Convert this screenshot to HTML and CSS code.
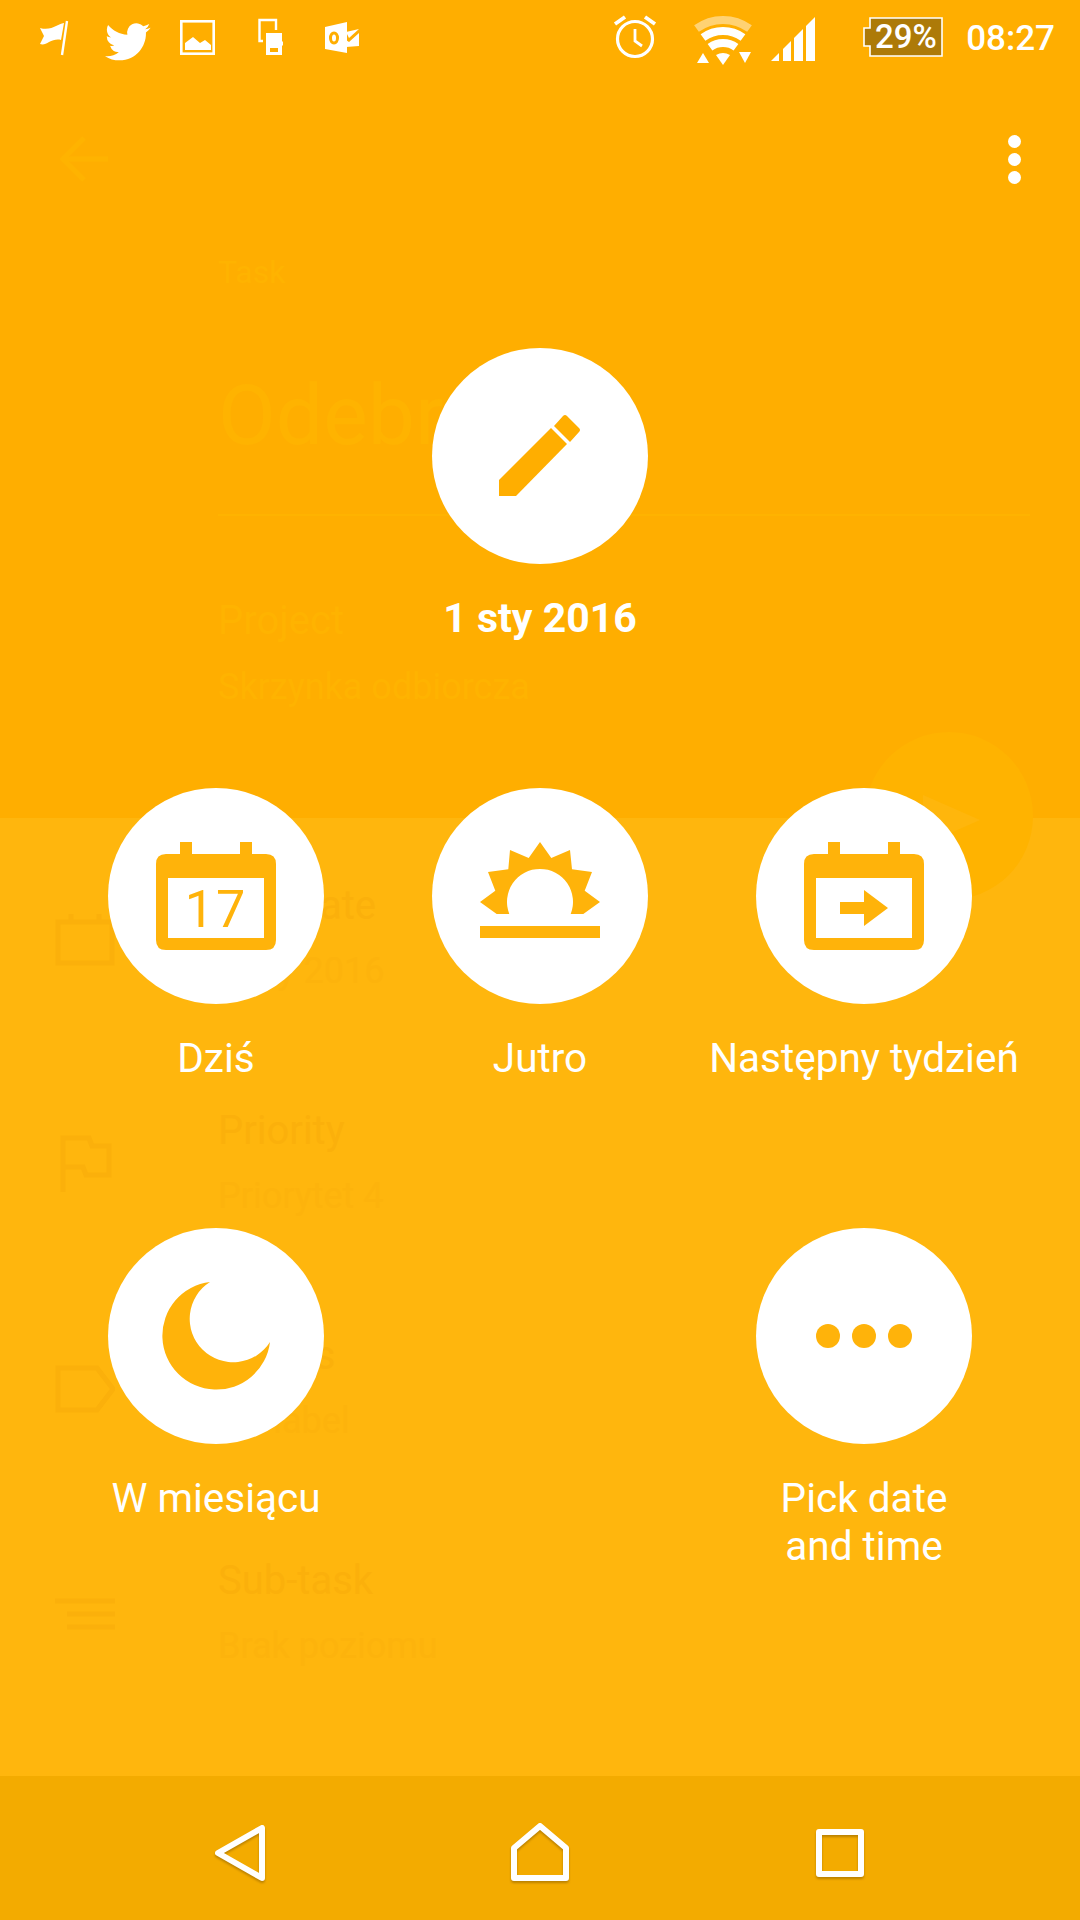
FILE: index.html
```html
<!DOCTYPE html>
<html lang="pl">

  <head>
    <meta charset="UTF-8">
    <meta name="viewport" content="width=device-width, initial-scale=1.0">
    <title>Task - date picker</title>
    <link rel="stylesheet" href="styles.css">
  </head>

  <body>

    <div class="screen">

      <header class="head">
        <div class="status">
          <div class="status-left">
            <svg class="slot" viewBox="18 0 72 76"><path class="w" d="M40 28C47 30 52 28 56 26C60 24 63 23 64 23L61 40C57 39 53 40 49 42C46 44 43 45 40 44L44 36Z"/><path class="ws" stroke-width="2.4" d="M67 21L62 55"/></svg>
            <svg class="slot" viewBox="0 0 72 76"><g transform="translate(15 19) scale(1.9)"><path class="w" d="M23.953 4.57a10 10 0 01-2.825.775 4.958 4.958 0 002.163-2.723c-.951.555-2.005.959-3.127 1.184a4.92 4.92 0 00-8.384 4.482C7.69 8.095 4.067 6.13 1.64 3.162a4.822 4.822 0 00-.666 2.475c0 1.71.87 3.213 2.188 4.096a4.904 4.904 0 01-2.228-.616v.06a4.923 4.923 0 003.946 4.827 4.996 4.996 0 01-2.212.085 4.936 4.936 0 004.604 3.417 9.867 9.867 0 01-6.102 2.105c-.39 0-.779-.023-1.17-.067a13.995 13.995 0 007.557 2.209c9.053 0 13.998-7.496 13.998-13.985 0-.21 0-.42-.015-.63A9.935 9.935 0 0024 4.59z"/></g></svg>
            <svg class="slot" viewBox="162 0 72 76"><rect class="ws" stroke-width="2.6" x="181.3" y="21.3" width="32.4" height="32.4"/><path class="w" d="M185 50V43L193 37L200 43L205 40L211 45V50Z"/></svg>
            <svg class="slot" viewBox="234 0 72 76"><path class="ws" stroke-width="2.4" d="M263 41H259.500V20H276V30"/><path class="w" d="M266 33H282V41L283 42V45L282 46V55H266Z"/><path class="cut" d="M270 48H278V52H270Z"/></svg>
            <svg class="slot" viewBox="306 0 72 76"><path class="w" d="M325 27L347 22V53L325 49Z"/><ellipse class="cuts" stroke-width="3" cx="334" cy="38" rx="3.500" ry="5"/><path class="w" d="M346 32L359 29L349 38Z"/><path class="w" d="M346 40L349 42L359 33V46L346 47Z"/></svg>
          </div>
          <div class="status-right">
            <svg class="ic-alarm" viewBox="612 0 46 76"><circle class="ws" stroke-width="3.200" cx="635" cy="39" r="17.500"/><path class="ws" stroke-width="3.800" d="M615 24L625 17M645 17L655 24"/><path class="ws" stroke-width="2.800" d="M635 29V41L642 46"/></svg>
            <svg class="ic-wifi" viewBox="693 0 62 76"><path class="ws faint" stroke-width="8" d="M696.500 28.600A45 45 0 0 1 749.500 28.600"/><path class="ws" stroke-width="8" d="M703 37.500A34 34 0 0 1 743 37.500"/><path class="ws" stroke-width="8" d="M710 47.200A22 22 0 0 1 736 47.200"/><path class="w" d="M723 65L716 55Q723 51 730 55Z"/><path class="w" d="M697 63L703 53L709 63Z"/><path class="w" d="M739 52H751L745 63Z"/></svg>
            <svg class="ic-signal" viewBox="771 0 44 76"><path class="w" d="M771 61L779 53V61Z"/><path class="w" d="M783 49L791 41V61H783Z"/><path class="w" d="M794 38L803 29V61H794Z"/><path class="w" d="M806 26L815 17V61H806Z"/></svg>
            <svg class="ic-battery" viewBox="863 0 80 76"><path class="batt" d="M870 18H942V56H870V46H864V28H870Z"/><text class="batt-text" x="906" y="48" text-anchor="middle">29%</text></svg>
            <span class="clock">08:27</span>
          </div>
        </div>

        <div class="toolbar">
          <svg class="back" width="50" height="48" viewBox="0 0 50 48"><path d="M48 24H4M24 3L3 24L24 45"/></svg>
          <div class="more"><i></i><i></i><i></i></div>
        </div>

        <div class="form">
          <p class="form-label">Task</p>
          <p class="form-title">Odebr</p>
          <p class="form-head">Project</p>
          <p class="form-sub">Skrzynka odbiorcza</p>
        </div>
      </header>

      <main class="body">
        <div class="row">
          <svg class="row-icon" viewBox="0 0 60 60"><path d="M3 13H57V54H3ZM16 5V13M44 5V13"/></svg>
          <div><p class="row-title">Due date</p><p class="row-sub">1 sty 2016</p></div>
        </div>
        <div class="row">
          <svg class="row-icon" viewBox="0 0 60 60"><path d="M8 58V4H34L37 12H54V41H31L28 33H8"/></svg>
          <div><p class="row-title">Priority</p><p class="row-sub">Priorytet 4</p></div>
        </div>
        <div class="row">
          <svg class="row-icon" viewBox="0 0 60 60"><path d="M3 9H42L58 30L42 51H3Z"/></svg>
          <div><p class="row-title">Labels</p><p class="row-sub">No label</p></div>
        </div>
        <div class="row">
          <svg class="row-icon" viewBox="0 0 60 60"><path d="M0 17H60M12 30H60M12 43H60"/></svg>
          <div><p class="row-title">Sub-task</p><p class="row-sub">Brak poziomu</p></div>
        </div>
      </main>

      <nav class="navbar">
        <svg class="nav-icon" viewBox="210 1776 60 144"><path d="M262 1828V1878L218 1853Z"/></svg>
        <svg class="nav-icon" viewBox="510 1776 60 144"><path d="M514 1878V1848L540 1826L566 1848V1878Z"/></svg>
        <svg class="nav-icon" viewBox="810 1776 60 144"><rect x="819" y="1832" width="42" height="42"/></svg>
      </nav>

      <!-- ghost fab behind the dim layer -->
      <div class="fab">
        <svg width="168" height="168" viewBox="865 732 168 168"><path d="M923 795L980 820L923 845Z"/></svg>
      </div>

      <!-- quick date choices, over the form -->
      <div class="picker">
        <div class="choice c-pick">
          <div class="circle">
            <svg class="top-icon" width="216" height="216" viewBox="432 348 216 216">
              <path d="M499 480L551 428L567 444L516 496H499Z"/>
              <path d="M554 426L563 416Q565 414 567 416L579 428Q581 430 579 432L570 442Z"/>
            </svg>
          </div>
          <p class="choice-date">1 sty 2016</p>
        </div>

        <div class="choice c-today">
          <div class="circle">
            <svg class="low-icon" width="216" height="216" viewBox="108 788 216 216">
              <path d="M180 842H192V854H240V842H252V854H266Q276 854 276 864V940Q276 950 266 950H166Q156 950 156 940V864Q156 854 166 854H180ZM168 878V938H264V878Z" fill-rule="evenodd"/>
              <text class="cal-num" x="216" y="927" text-anchor="middle">17</text>
            </svg>
          </div>
          <p class="choice-name">Dziś</p>
        </div>

        <div class="choice c-tomorrow">
          <div class="circle">
            <svg class="low-icon" width="216" height="216" viewBox="432 788 216 216">
              <path d="M480 902L495.300 890.700L488 872L508.300 869.300L510 850L528.700 858L540 842L551.300 858L570 850L572 869.300L592 872L584.700 890.700L600 902L583.300 914H570.700A33 33 0 1 0 509.300 914H496.700Z"/>
              <path d="M480 926H600V938H480Z"/>
            </svg>
          </div>
          <p class="choice-name">Jutro</p>
        </div>

        <div class="choice c-week">
          <div class="circle">
            <svg class="low-icon" width="216" height="216" viewBox="756 788 216 216">
              <path d="M828 842H840V854H888V842H900V854H914Q924 854 924 864V940Q924 950 914 950H814Q804 950 804 940V864Q804 854 814 854H828ZM816 878V938H912V878Z" fill-rule="evenodd"/>
              <path d="M840 902H864V890L888 908L864 926V914H840Z"/>
            </svg>
          </div>
          <p class="choice-name">Następny tydzień</p>
        </div>

        <div class="choice c-month">
          <div class="circle">
            <svg class="low-icon" width="216" height="216" viewBox="108 1228 216 216">
              <path d="M210 1282A54 54 0 1 0 270 1342A43.500 43.500 0 1 1 210 1282Z"/>
            </svg>
          </div>
          <p class="choice-name">W miesiącu</p>
        </div>

        <div class="choice c-custom">
          <div class="circle">
            <svg class="low-icon" width="216" height="216" viewBox="756 1228 216 216">
              <circle cx="828" cy="1336" r="12"/>
              <circle cx="864" cy="1336" r="12"/>
              <circle cx="900" cy="1336" r="12"/>
            </svg>
          </div>
          <p class="choice-name">Pick date<br>and time</p>
        </div>
      </div>

    </div>

  </body>

</html>
```

FILE: styles.css
```css
* {
  box-sizing: border-box;
}

body {
  font-family: 'Roboto', sans-serif;
  margin: 0;
  padding: 0;
  background-color: #ffb60d;
}

p {
  margin: 0;
}

svg {
  display: block;
}

.screen {
  position: relative;
  width: 1080px;
  height: 1920px;
  overflow: hidden;
  display: flex;
  flex-direction: column;
}

/* top part */
.head {
  height: 818px;
  flex-shrink: 0;
  background-color: #ffae00;
  color: #ffb300;
}

.status {
  height: 76px;
  display: flex;
  justify-content: space-between;
  padding-left: 18px;
  padding-right: 25px;
}

.status-left,
.status-right {
  display: flex;
}

.slot {
  width: 72px;
  height: 76px;
}

.w {
  fill: white;
}

.ws {
  fill: none;
  stroke: white;
}

.ws.faint {
  stroke: rgba(255, 255, 255, 0.45);
}

.cut {
  fill: #ffae00;
}

.cuts {
  fill: none;
  stroke: #ffae00;
}

.ic-alarm {
  width: 46px;
  height: 76px;
}

.ic-wifi {
  width: 62px;
  height: 76px;
  margin-left: 35px;
}

.ic-signal {
  width: 44px;
  height: 76px;
  margin-left: 16px;
}

.ic-battery {
  width: 80px;
  height: 76px;
  margin-left: 48px;
}

.batt {
  fill: #ad7a08;
  stroke: white;
  stroke-width: 1.6;
}

.batt-text {
  fill: white;
  font-size: 33px;
  font-weight: 500;
}

.clock {
  margin-left: 23px;
  font-size: 35px;
  font-weight: 500;
  line-height: 78px;
  color: white;
}

.toolbar {
  height: 166px;
  padding: 0 59px 0 60px;
  display: flex;
  align-items: center;
  justify-content: space-between;
}

.back path {
  fill: none;
  stroke: #ffb300;
  stroke-width: 5;
}

.more {
  display: flex;
  flex-direction: column;
  gap: 5px;
}

.more i {
  display: block;
  width: 13px;
  height: 13px;
  border-radius: 50%;
  background-color: white;
}

.form {
  padding: 10px 50px 0 218px;
}

.form-label {
  font-size: 32px;
  line-height: 40px;
}

.form-title {
  height: 224px;
  padding-top: 74px;
  font-size: 84px;
  line-height: 100px;
  border-bottom: 2px solid #ffb300;
}

.form-head {
  margin-top: 80px;
  font-size: 40px;
  line-height: 50px;
}

.form-sub {
  margin-top: 16px;
  font-size: 36px;
  line-height: 50px;
}

/* form rows under the overlay */
.body {
  flex: 1;
  min-height: 0;
  padding-top: 63px;
  color: #fbb00b;
}

.row {
  height: 225px;
  display: grid;
  grid-template-columns: 218px 1fr;
  align-content: start;
  align-items: center;
}

.row-icon {
  width: 60px;
  height: 60px;
  margin-left: 55px;
}

.row-icon path {
  fill: none;
  stroke: #fbb00b;
  stroke-width: 5;
}

.row-title {
  font-size: 40px;
  line-height: 50px;
}

.row-sub {
  margin-top: 15px;
  font-size: 36px;
  line-height: 50px;
  color: #fdb30c;
}

/* bottom buttons */
.navbar {
  height: 144px;
  flex-shrink: 0;
  display: flex;
  justify-content: center;
  gap: 240px;
  background-color: #f3ab00;
}

.nav-icon {
  width: 60px;
  height: 144px;
  overflow: visible;
  filter: drop-shadow(0 2px 1px rgba(120, 80, 0, 0.45));
}

.nav-icon path,
.nav-icon rect {
  fill: none;
  stroke: white;
  stroke-width: 6;
  stroke-linejoin: round;
}

.fab {
  position: absolute;
  left: 865px;
  top: 732px;
  width: 168px;
  height: 168px;
  border-radius: 50%;
  background-color: #ffb300;
}

.fab path {
  fill: #ffb60c;
}

/* overlay */
.picker {
  position: absolute;
  left: 54px;
  top: 348px;
  display: grid;
  grid-template-columns: repeat(3, 324px);
  grid-template-rows: 440px 440px auto;
}

.choice {
  display: flex;
  flex-direction: column;
  align-items: center;
}

.c-pick {
  grid-column: 2;
  grid-row: 1;
}

.c-today {
  grid-column: 1;
  grid-row: 2;
}

.c-tomorrow {
  grid-column: 2;
  grid-row: 2;
}

.c-week {
  grid-column: 3;
  grid-row: 2;
}

.c-month {
  grid-column: 1;
  grid-row: 3;
}

.c-custom {
  grid-column: 3;
  grid-row: 3;
}

.circle {
  width: 216px;
  height: 216px;
  border-radius: 50%;
  background-color: white;
}

.top-icon {
  fill: #ffae00;
}

.low-icon {
  fill: #ffb30a;
}

.cal-num {
  font-size: 52px;
  letter-spacing: 2px;
}

.choice-date {
  margin-top: 30px;
  font-size: 41px;
  font-weight: 700;
  line-height: 48px;
  color: white;
}

.choice-name {
  margin-top: 30px;
  font-size: 40.500px;
  line-height: 48px;
  text-align: center;
  white-space: nowrap;
  color: white;
}
```
